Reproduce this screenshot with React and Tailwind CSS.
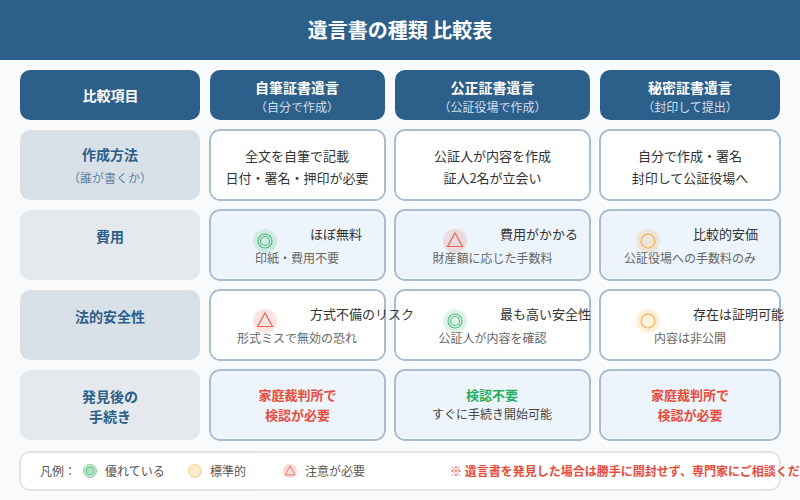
const font = { fontFamily: '"Noto Sans CJK JP", "Noto Sans", sans-serif' };

const navy = "#2c5f8a";

function Mark({ type, size = 24 }) {
  const tones = {
    good: "#27ae60",
    mid: "#f39c12",
    warn: "#e74c3c",
  };
  const color = tones[type];
  return (
    <svg width={size} height={size} viewBox="0 0 24 24" className="shrink-0">
      <circle cx="12" cy="12" r="12" fill={color} fillOpacity="0.15" />
      {type === "good" && (
        <>
          <circle cx="12" cy="12" r="7" fill="none" stroke={color} strokeOpacity="0.75" strokeWidth="1.2" />
          <circle cx="12" cy="12" r="4.5" fill="none" stroke={color} strokeOpacity="0.75" strokeWidth="1.2" />
        </>
      )}
      {type === "mid" && <circle cx="12" cy="12" r="7" fill="none" stroke={color} strokeOpacity="0.75" strokeWidth="1.2" />}
      {type === "warn" && <path d="M12 4 L19.5 17.5 L4.5 17.5 Z" fill="none" stroke={color} strokeOpacity="0.85" strokeWidth="1.2" />}
    </svg>
  );
}

function LegendMark({ type }) {
  if (type === "good") {
    return (
      <svg width="14" height="14" viewBox="0 0 14 14" className="shrink-0">
        <circle cx="7" cy="7" r="6.5" fill="#27ae60" fillOpacity="0.3" stroke="#27ae60" strokeOpacity="0.45" />
        <circle cx="7" cy="7" r="3.8" fill="#27ae60" fillOpacity="0.08" stroke="#27ae60" strokeOpacity="0.55" />
      </svg>
    );
  }
  if (type === "mid") {
    return (
      <svg width="14" height="14" viewBox="0 0 14 14" className="shrink-0">
        <circle cx="7" cy="7" r="6.3" fill="#f39c12" fillOpacity="0.2" stroke="#f39c12" strokeOpacity="0.5" />
      </svg>
    );
  }
  return (
    <svg width="14" height="14" viewBox="0 0 14 14" className="shrink-0">
      <circle cx="7" cy="7" r="7" fill="#e74c3c" fillOpacity="0.2" />
      <path d="M7 1.8 L12 11 L2 11 Z" fill="none" stroke="#e74c3c" strokeOpacity="0.65" />
    </svg>
  );
}

function HeadCell({ title, sub, nudge = "" }) {
  return (
    <div
      className={`h-[50px] rounded-[10px] bg-[#2c5f8a] flex flex-col items-center text-white ${
        sub ? "pt-[7px]" : "justify-center"
      } ${nudge}`}
    >
      <div className="text-sm font-bold leading-[20px]">{title}</div>
      {sub && <div className="text-xs leading-[20px] text-[#d0dfec]">{sub}</div>}
    </div>
  );
}

function RowLabel({ lines, sub, bg, pad }) {
  return (
    <div className={`h-[70px] rounded-[10px] flex flex-col items-center text-[#2c5f8a] ${bg} ${pad}`}>
      {lines.map((l) => (
        <div key={l} className="text-sm font-bold leading-[20px]">
          {l}
        </div>
      ))}
      {sub && <div className="text-xs leading-[28px] text-[#5d82a3]">{sub}</div>}
    </div>
  );
}

function Cell({ tint, className = "", children }) {
  return (
    <div
      className={`h-[70px] rounded-[10px] shadow-[0_0_0_0.75px_#8fa9c4,inset_0_0_0_0.75px_#8fa9c4] ${
        tint ? "bg-[#edf4fb]" : "bg-white"
      } ${className}`}
    >
      {children}
    </div>
  );
}

function PlainCell({ lines, nudge = "" }) {
  return (
    <Cell className={`flex flex-col items-center pt-[15px] text-[13px] leading-[22px] text-[#333] ${nudge}`}>
      {lines.map((l) => (
        <div key={l}>{l}</div>
      ))}
    </Cell>
  );
}

function MarkCell({ tint, type, title, sub, pad, subNudge = "" }) {
  return (
    <Cell tint={tint} className="flex flex-col pt-[14px]">
      <div className={`flex items-start gap-[34px] ${pad}`}>
        <div className="mt-[5px]">
          <Mark type={type} />
        </div>
        <span className="relative z-10 -ml-px text-[13px] leading-[20px] whitespace-nowrap text-[#333]">{title}</span>
      </div>
      <div className={`-mt-[4px] text-center text-xs leading-[18px] text-[#666] ${subNudge}`}>{sub}</div>
    </Cell>
  );
}

function ProcedureCell({ lines, tone, sub }) {
  return (
    <Cell tint className={`flex flex-col items-center justify-center text-[13px] leading-[20px] ${sub ? "pb-[2px] pr-px" : ""}`}>
      {lines.map((l) => (
        <div key={l} className={`font-bold ${tone}`}>
          {l}
        </div>
      ))}
      {sub && <div className="text-xs leading-[18px] text-[#444]">{sub}</div>}
    </Cell>
  );
}

export default function App() {
  return (
    <div className="w-[800px] h-[500px] overflow-hidden bg-[#f8fafc]" style={font}>
      {/* Title bar */}
      <div className="h-[60px] flex items-center justify-center text-white text-xl font-bold" style={{ backgroundColor: navy }}>
        遺言書の種類 比較表
      </div>

      {/* Comparison table */}
      <div className="mt-[10px] px-5 grid grid-cols-[180px_175px_195px_180px] gap-[10px]">
        <HeadCell title="比較項目" nudge="pl-px" />
        <HeadCell title="自筆証書遺言" sub="（自分で作成）" nudge="pr-px" />
        <HeadCell title="公正証書遺言" sub="（公証役場で作成）" />
        <HeadCell title="秘密証書遺言" sub="（封印して提出）" />

        <RowLabel lines={["作成方法"]} sub="（誰が書くか）" bg="bg-[#d9e1e8]" pad="pt-[14px]" />
        <PlainCell lines={["全文を自筆で記載", "日付・署名・押印が必要"]} nudge="pr-px" />
        <PlainCell lines={["公証人が内容を作成", "証人2名が立会い"]} />
        <PlainCell lines={["自分で作成・署名", "封印して公証役場へ"]} />

        <RowLabel lines={["費用"]} bg="bg-[#e5e9ed]" pad="pt-[16px]" />
        <MarkCell tint type="good" title="ほぼ無料" sub="印紙・費用不要" pad="pl-[43px]" subNudge="pr-px" />
        <MarkCell tint type="warn" title="費用がかかる" sub="財産額に応じた手数料" pad="pl-[48px]" />
        <MarkCell tint type="mid" title="比較的安価" sub="公証役場への手数料のみ" pad="pl-[36px]" />

        <RowLabel lines={["法的安全性"]} bg="bg-[#d9e1e8]" pad="pt-[16px]" />
        <MarkCell type="warn" title="方式不備のリスク" sub="形式ミスで無効の恐れ" pad="pl-[43px]" subNudge="pr-px" />
        <MarkCell type="good" title="最も高い安全性" sub="公証人が内容を確認" pad="pl-[48px]" />
        <MarkCell type="mid" title="存在は証明可能" sub="内容は非公開" pad="pl-[36px]" />

        <RowLabel lines={["発見後の", "手続き"]} bg="bg-[#e5e9ed]" pad="pt-[16px]" />
        <ProcedureCell lines={["家庭裁判所で", "検認が必要"]} tone="text-[#e74c3c]" />
        <ProcedureCell lines={["検認不要"]} tone="text-[#27ae60]" sub="すぐに手続き開始可能" />
        <ProcedureCell lines={["家庭裁判所で", "検認が必要"]} tone="text-[#e74c3c]" />
      </div>

      {/* Legend */}
      <div className="mx-5 mt-3 h-[38px] rounded-[10px] bg-white shadow-[0_0_0_0.75px_#dcdcdc,inset_0_0_0_0.75px_#dcdcdc] flex items-center pl-5 text-xs text-[#555] whitespace-nowrap">
        <span className="w-[43px] shrink-0">凡例：</span>
        <LegendMark type="good" />
        <span className="ml-[8px] w-[60px] shrink-0">優れている</span>
        <span className="ml-[23px] shrink-0">
          <LegendMark type="mid" />
        </span>
        <span className="ml-[8px] w-[36px] shrink-0">標準的</span>
        <span className="ml-[37px] shrink-0">
          <LegendMark type="warn" />
        </span>
        <span className="ml-[8px] w-[60px] shrink-0">注意が必要</span>
        <span className="ml-[85px] shrink-0 font-bold text-[#e74c3c]">※ 遺言書を発見した場合は勝手に開封せず、専門家にご相談ください</span>
      </div>
    </div>
  );
}
